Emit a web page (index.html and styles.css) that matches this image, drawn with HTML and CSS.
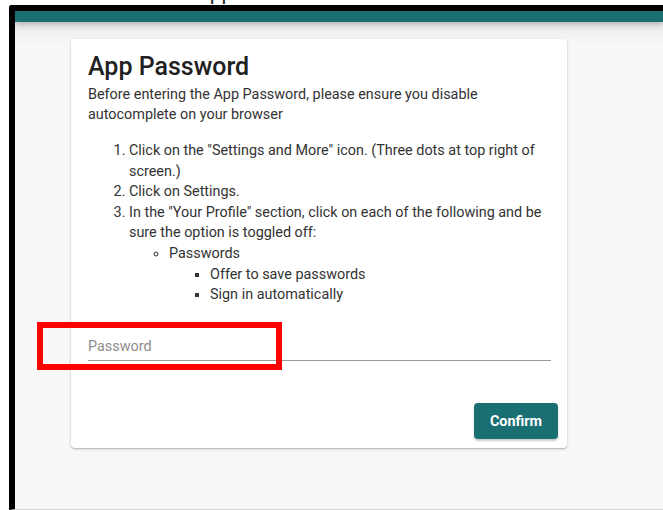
FILE: index.html
```html
<!DOCTYPE html>
<html lang="en">
<head>
<meta charset="utf-8">
<title>App Password</title>
<link rel="stylesheet" href="styles.css">
</head>
<body>
  <div class="caption"><span>App Password</span></div>
  <div class="frame">
    <header class="appbar"></header>
    <main class="content">
      <section class="card">
        <h1 class="card-title">App Password</h1>
        <p class="intro">Before entering the App Password, please ensure you disable autocomplete on your browser</p>
        <ol class="steps">
          <li>Click on the "Settings and More" icon. (Three dots at top right of screen.)</li>
          <li>Click on Settings.</li>
          <li>In the "Your Profile" section, click on each of the following and be sure the option is toggled off:
            <ul class="sub">
              <li>Passwords
                <ul class="subsub">
                  <li>Offer to save passwords</li>
                  <li>Sign in automatically</li>
                </ul>
              </li>
            </ul>
          </li>
        </ol>
        <div class="field">
          <input class="field-input" type="password" placeholder="Password" autocomplete="off">
          <span class="highlight"></span>
        </div>
        <div class="actions">
          <button class="btn-confirm" type="button">Confirm</button>
        </div>
      </section>
    </main>
  </div>
</body>
</html>
```

FILE: styles.css
```css
html, body {
  margin: 0;
  padding: 0;
  background: #ffffff;
  font-family: Roboto, "Liberation Sans", Arial, sans-serif;
  color: #333333;
  height: 100%;
  overflow: hidden;
}

/* window caption, mostly scrolled out above the frame */
.caption {
  height: 5px;
  overflow: hidden;
  position: relative;
}
.caption span {
  position: absolute;
  left: 196px;
  bottom: 2px;
  font-size: 21px;
  line-height: 20px;
  color: #222;
  white-space: nowrap;
}

.frame {
  margin-left: 9px;
  border-left: 6px solid #000;
  border-top: 6px solid #000;
  border-top-left-radius: 3px;
  height: 505px;
  display: flex;
  flex-direction: column;
  background: #f8f8f8;
  border-bottom: 1px solid #d6d6d6;
  box-sizing: border-box;
}

.appbar {
  height: 11px;
  background: #1a6f73;
  flex: none;
  position: relative;
  z-index: 1;
  box-shadow: 0 2px 6px rgba(0, 0, 0, 0.25);
}

.content {
  flex: 1;
  padding: 17px 0 0 56px;
  background: linear-gradient(#e9e9e9, #f8f8f8 22px);
}

.card {
  width: 496px;
  height: 409px;
  box-sizing: border-box;
  background: #fff;
  border-radius: 4px;
  box-shadow: 0 1px 3px rgba(0, 0, 0, 0.2), 0 1px 1px rgba(0, 0, 0, 0.12);
  padding: 14px 9px 9px 17px;
  display: flex;
  flex-direction: column;
}

.card-title {
  margin: 0;
  font-size: 25px;
  font-weight: 500;
  line-height: 28px;
  color: #212121;
}

.intro {
  margin: 4px 0 0;
  font-size: 14.4px;
  line-height: 20px;
  width: 440px;
}

.steps {
  margin: 16px 0 0;
  padding-left: 41px;
  font-size: 14.4px;
  line-height: 20.6px;
  width: 430px;
}

.sub {
  list-style: circle;
  margin: 0;
  padding-left: 40px;
}
.subsub {
  list-style: square;
  margin: 0;
  padding-left: 41px;
}

.field {
  position: relative;
  margin-top: 25px;
  width: 463px;
}
.field-input {
  display: block;
  width: 100%;
  box-sizing: border-box;
  border: none;
  border-bottom: 1px solid #9a9a9a;
  padding: 6px 0 3px;
  font: 14.4px/20px Roboto, "Liberation Sans", Arial, sans-serif;
  color: #333;
  outline: none;
  background: transparent;
}
.field-input::placeholder {
  color: #8e8e8e;
}

/* red annotation box drawn over the field */
.highlight {
  position: absolute;
  left: -51px;
  top: -9px;
  width: 245px;
  height: 48px;
  box-sizing: border-box;
  border: 6px solid #ff0000;
  pointer-events: none;
}

.actions {
  margin-top: auto;
  display: flex;
  justify-content: flex-end;
}

.btn-confirm {
  width: 84px;
  height: 36px;
  border: none;
  border-radius: 4px;
  background: #1a6f73;
  color: #fff;
  font: 700 14.4px Roboto, "Liberation Sans", Arial, sans-serif;
  box-shadow: 0 2px 2px rgba(0, 0, 0, 0.2);
  cursor: pointer;
}
```
